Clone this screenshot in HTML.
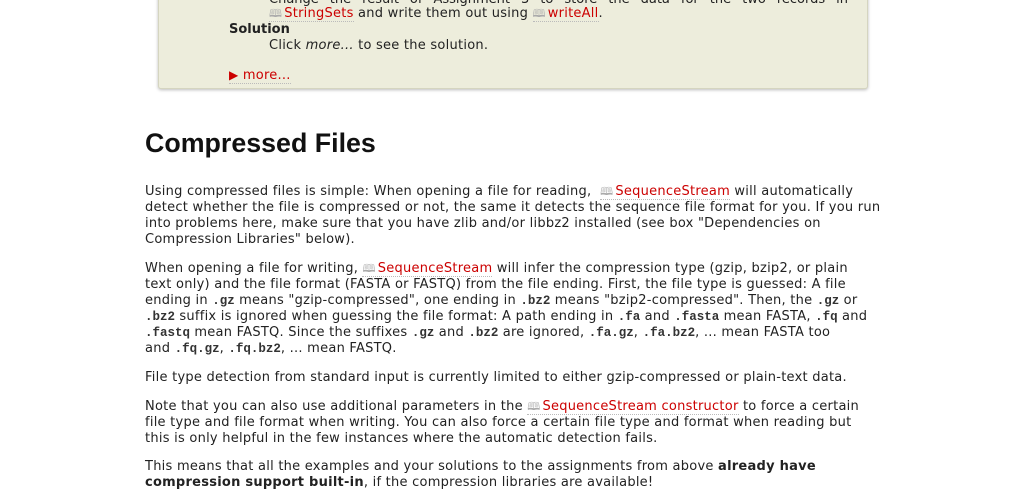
<!DOCTYPE html>
<html><head><meta charset="utf-8"><style>
body{margin:0;width:1009px;height:478px;overflow:hidden;background:#fff;font-family:"DejaVu Sans","Liberation Sans",sans-serif;font-size:13px;color:#222;}
.box{position:absolute;left:158px;top:-10px;width:708px;height:97px;background:#ededdc;border:1px solid #d5d5c0;border-radius:3px;box-shadow:0 1px 3px #bbb;}
.l{position:absolute;white-space:nowrap;line-height:16px;letter-spacing:0.25px;}
a{color:#c00;text-decoration:none;border-bottom:1px dotted #bbb;}
.bk{color:#aaa;font-size:11px;margin-right:2px;}
code{font-family:"Liberation Mono",monospace;font-size:12.5px;font-weight:bold;color:#333;letter-spacing:0;}
h1{position:absolute;left:145px;top:128px;margin:0;font-family:"Liberation Sans",sans-serif;font-size:26.8px;font-weight:bold;color:#111;}
</style></head><body>
<div class="box"></div>
<div class="l" style="left:269px;top:-8px;width:579px;text-align:justify;text-align-last:justify;letter-spacing:0">Change the result of Assignment 3 to store the data for the two records in</div>
<div class="l" style="left:269px;top:6px"><a><span class="bk">&#x1F56E;</span>StringSets</a> and write them out using <a><span class="bk">&#x1F56E;</span>writeAll</a>.</div>
<div class="l" style="left:229px;top:22px;font-weight:bold;letter-spacing:0">Solution</div>
<div class="l" style="left:269px;top:38px">Click <i>more...</i> to see the solution.</div>
<div class="l" style="left:229px;top:67px"><a><span style="font-size:12px">&#9654;</span> more...</a></div>
<h1>Compressed Files</h1>
<div class="l" style="left:145px;top:184px">Using compressed files is simple: When opening a file for reading, &nbsp;<a><span class="bk">&#x1F56E;</span>SequenceStream</a> will automatically</div>
<div class="l" style="left:145px;top:200px">detect whether the file is compressed or not, the same it detects the sequence file format for you. If you run</div>
<div class="l" style="left:145px;top:216px">into problems here, make sure that you have zlib and/or libbz2 installed (see box "Dependencies on</div>
<div class="l" style="left:145px;top:232px">Compression Libraries" below).</div>
<div class="l" style="left:145px;top:261px">When opening a file for writing, <a><span class="bk">&#x1F56E;</span>SequenceStream</a> will infer the compression type (gzip, bzip2, or plain</div>
<div class="l" style="left:145px;top:277px">text only) and the file format (FASTA or FASTQ) from the file ending. First, the file type is guessed: A file</div>
<div class="l" style="left:145px;top:293px">ending in <code>.gz</code> means "gzip-compressed", one ending in <code>.bz2</code> means "bzip2-compressed". Then, the <code>.gz</code> or</div>
<div class="l" style="left:145px;top:309px"><code>.bz2</code> suffix is ignored when guessing the file format: A path ending in <code>.fa</code> and <code>.fasta</code> mean FASTA, <code>.fq</code> and</div>
<div class="l" style="left:145px;top:325px"><code>.fastq</code> mean FASTQ. Since the suffixes <code>.gz</code> and <code>.bz2</code> are ignored, <code>.fa.gz</code>, <code>.fa.bz2</code>, ... mean FASTA too</div>
<div class="l" style="left:145px;top:341px">and <code>.fq.gz</code>, <code>.fq.bz2</code>, ... mean FASTQ.</div>
<div class="l" style="left:145px;top:370px">File type detection from standard input is currently limited to either gzip-compressed or plain-text data.</div>
<div class="l" style="left:145px;top:399px">Note that you can also use additional parameters in the <a><span class="bk">&#x1F56E;</span>SequenceStream constructor</a> to force a certain</div>
<div class="l" style="left:145px;top:415px">file type and file format when writing. You can also force a certain file type and format when reading but</div>
<div class="l" style="left:145px;top:431px">this is only helpful in the few instances where the automatic detection fails.</div>
<div class="l" style="left:145px;top:459px">This means that all the examples and your solutions to the assignments from above <b>already have</b></div>
<div class="l" style="left:145px;top:475px"><b>compression support built-in</b>, if the compression libraries are available!</div>
</body></html>
